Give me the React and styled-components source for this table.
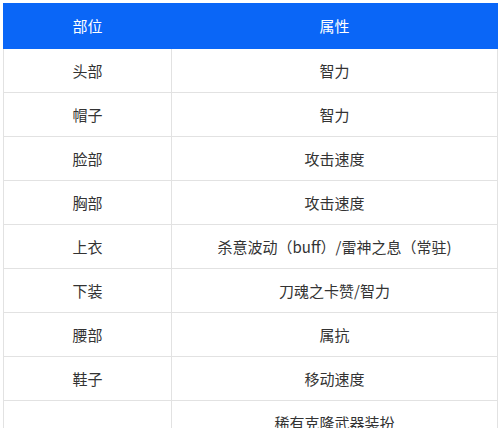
import React from "react";
import styled, { createGlobalStyle } from "styled-components";

const Global = createGlobalStyle`
  html, body { margin: 0; padding: 0; background: #fff; }
  body { font-family: "Noto Sans CJK SC", "Noto Sans", sans-serif; }
`;

const Wrap = styled.div`
  padding: 3px 3px 0 3px;
  height: 425px;
  overflow: hidden;
`;

const Table = styled.table`
  width: 494px;
  border-collapse: collapse;
  table-layout: fixed;
  font-size: 15px;
`;

const Col = styled.col`
  width: ${(p) => p.$w}px;
`;

const HeadCell = styled.th`
  background: #0a66f7;
  color: #fff;
  font-weight: 400;
  height: 44px;
  padding: 0;
  line-height: 22px;
  text-align: center;
  border: 1px solid #0a66f7;
  & + & {
    border-left: 1px solid #9fc3fb;
  }
`;

const Cell = styled.td`
  color: #333;
  text-align: center;
  padding: 10px 8px;
  line-height: 23px;
  border: 1px solid #e2e2e2;
  vertical-align: middle;
`;

const rows = [
  ["头部", "智力"],
  ["帽子", "智力"],
  ["脸部", "攻击速度"],
  ["胸部", "攻击速度"],
  ["上衣", "杀意波动（buff）/雷神之息（常驻)"],
  ["下装", "刀魂之卡赞/智力"],
  ["腰部", "属抗"],
  ["鞋子", "移动速度"],
  ["", "稀有克隆武器装扮"],
];

export default function App() {
  return (
    <>
      <Global />
      <Wrap>
        <Table>
          <colgroup>
            <Col $w={168} />
            <Col $w={326} />
          </colgroup>
          <thead>
            <tr>
              <HeadCell>部位</HeadCell>
              <HeadCell>属性</HeadCell>
            </tr>
          </thead>
          <tbody>
            {rows.map(([a, b], i) => (
              <tr key={i}>
                <Cell>{a}</Cell>
                <Cell>{b}</Cell>
              </tr>
            ))}
          </tbody>
        </Table>
      </Wrap>
    </>
  );
}
